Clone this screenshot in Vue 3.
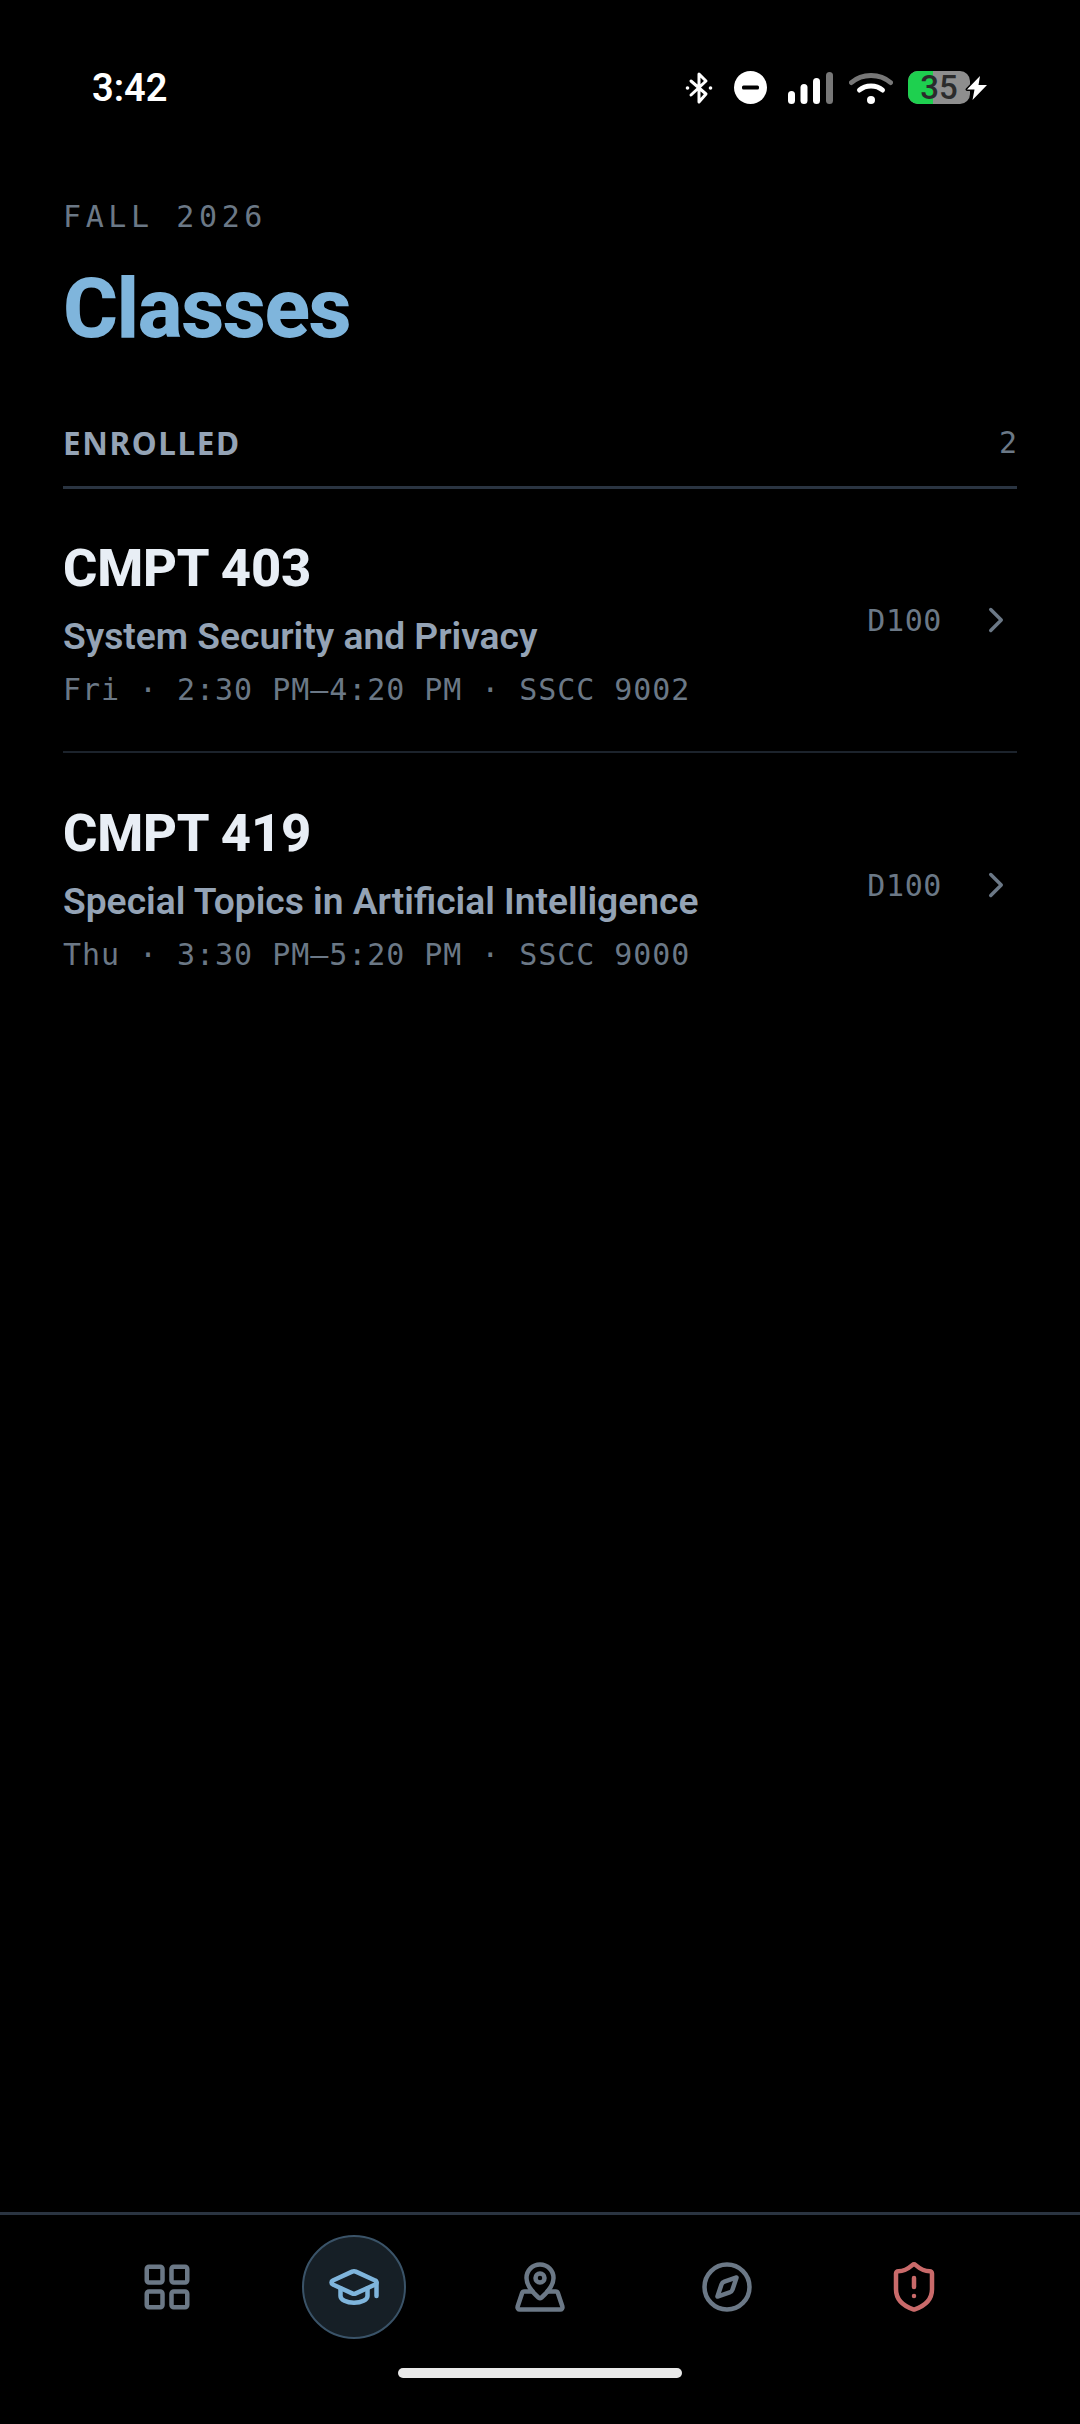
<template>
  <div class="screen">
    <div class="status-bar">
      <span class="time">3:42</span>
      <div class="status-icons">
        <svg class="ic-bt" width="28" height="34" viewBox="0 0 28 34" fill="none" stroke="#fff" stroke-width="3" stroke-linecap="round" stroke-linejoin="round">
          <path d="M6 10 L21 23 L14 31 V3 L21 10 L6 24" />
          <circle cx="2.5" cy="17" r="1.8" fill="#fff" stroke="none" />
          <circle cx="25.5" cy="17" r="1.8" fill="#fff" stroke="none" />
        </svg>
        <svg class="ic-dnd" width="33" height="33" viewBox="0 0 33 33">
          <circle cx="16.5" cy="16.5" r="16.5" fill="#fff" />
          <rect x="8" y="14.5" width="17" height="4" rx="1.5" fill="#000" />
        </svg>
        <svg class="ic-signal" width="45" height="32" viewBox="0 0 45 32">
          <rect x="0" y="19" width="7" height="13" rx="3.5" fill="#fff" />
          <rect x="12.5" y="12" width="7" height="20" rx="3.5" fill="#fff" />
          <rect x="25" y="6" width="7" height="26" rx="3.5" fill="#fff" />
          <rect x="38" y="0" width="7" height="32" rx="3.5" fill="#777" />
        </svg>
        <svg class="ic-wifi" width="44" height="32" viewBox="0 0 44 32" fill="none" stroke-linecap="round">
          <path d="M2.5 10.5 C13 1 31 1 41.5 10.5" stroke="#777" stroke-width="5" />
          <path d="M10.5 18 C16.5 12.5 27.5 12.5 33.5 18" stroke="#fff" stroke-width="5" />
          <circle cx="22" cy="28" r="4" fill="#fff" />
        </svg>
        <div class="battery">
          <div class="battery-fill" :style="{ width: batteryLevel + 5 + '%' }"></div>
          <span class="battery-num">{{ batteryLevel }}</span>
          <svg class="ic-bolt" width="26" height="30" viewBox="0 0 26 30">
            <path d="M16 3 L3 16.5 H10.5 L8.5 27 L23 12 H14.5 Z" fill="#fff" stroke="#000" stroke-width="3" stroke-linejoin="round" paint-order="stroke" />
          </svg>
        </div>
      </div>
    </div>

    <main class="content">
      <div class="term">FALL 2026</div>
      <h1 class="title">Classes</h1>

      <div class="section-head">
        <span class="section-label">ENROLLED</span>
        <span class="section-count">{{ classes.length }}</span>
      </div>

      <div v-for="c in classes" :key="c.code" class="class-row">
        <div class="class-info">
          <div class="class-code">{{ c.code }}</div>
          <div class="class-name">{{ c.name }}</div>
          <div class="class-meta">{{ c.meta }}</div>
        </div>
        <span class="class-section">{{ c.section }}</span>
        <svg class="chevron" width="42" height="42" viewBox="0 0 24 24" fill="none" stroke="currentColor" stroke-width="2" stroke-linecap="round" stroke-linejoin="round">
          <path d="m9 18 6-6-6-6" />
        </svg>
      </div>
    </main>

    <nav class="tabbar">
      <div v-for="t in tabs" :key="t.name" class="tab" :class="{ active: t.active, alert: t.alert }">
        <div class="tab-icon">
          <svg width="54" height="54" viewBox="0 0 24 24" fill="none" stroke="currentColor" stroke-width="2" stroke-linecap="round" stroke-linejoin="round">
            <template v-if="t.name === 'home'">
              <rect x="3" y="3" width="7" height="7" rx="1" />
              <rect x="14" y="3" width="7" height="7" rx="1" />
              <rect x="14" y="14" width="7" height="7" rx="1" />
              <rect x="3" y="14" width="7" height="7" rx="1" />
            </template>
            <template v-else-if="t.name === 'classes'">
              <path d="M21.42 10.922a1 1 0 0 0-.019-1.838L12.83 5.18a2 2 0 0 0-1.66 0L2.6 9.08a1 1 0 0 0 0 1.832l8.57 3.908a2 2 0 0 0 1.66 0z" />
              <path d="M22 10v6" />
              <path d="M6 12.5V16a6 3 0 0 0 12 0v-3.5" />
            </template>
            <template v-else-if="t.name === 'map'">
              <path d="M18 8c0 3.613-3.869 7.429-5.393 8.795a1 1 0 0 1-1.214 0C9.87 15.429 6 11.613 6 8a6 6 0 0 1 12 0" />
              <circle cx="12" cy="8" r="2" />
              <path d="M8.714 14h-3.71a1 1 0 0 0-.948.683l-2.004 6A1 1 0 0 0 3 22h18a1 1 0 0 0 .948-1.316l-2-6a1 1 0 0 0-.949-.684h-3.712" />
            </template>
            <template v-else-if="t.name === 'compass'">
              <path d="m16.24 7.76-1.804 5.411a2 2 0 0 1-1.265 1.265L7.76 16.24l1.804-5.411a2 2 0 0 1 1.265-1.265z" />
              <circle cx="12" cy="12" r="10" />
            </template>
            <template v-else>
              <path d="M20 13c0 5-3.5 7.5-7.66 8.95a1 1 0 0 1-.67-.01C7.5 20.5 4 18 4 13V6a1 1 0 0 1 1-1c2 0 4.5-1.2 6.24-2.72a1.17 1.17 0 0 1 1.52 0C14.51 3.81 17 5 19 5a1 1 0 0 1 1 1z" />
              <path d="M12 8v4" />
              <path d="M12 16h.01" />
            </template>
          </svg>
        </div>
      </div>
    </nav>

    <div class="home-bar"><div class="home-pill"></div></div>
  </div>
</template>

<script setup>
const batteryLevel = 35

const classes = [
  { code: 'CMPT 403', name: 'System Security and Privacy', meta: 'Fri · 2:30 PM–4:20 PM · SSCC 9002', section: 'D100' },
  { code: 'CMPT 419', name: 'Special Topics in Artificial Intelligence', meta: 'Thu · 3:30 PM–5:20 PM · SSCC 9000', section: 'D100' }
]

const tabs = [
  { name: 'home' },
  { name: 'classes', active: true },
  { name: 'map' },
  { name: 'compass' },
  { name: 'safety', alert: true }
]
</script>

<style>
html,
body {
  margin: 0;
  background: #000;
}
</style>

<style scoped>
.screen {
  width: 1080px;
  height: 2424px;
  background: #000;
  display: flex;
  flex-direction: column;
  font-family: Roboto, "Liberation Sans", sans-serif;
  overflow: hidden;
}

.status-bar {
  height: 175px;
  flex: none;
  display: flex;
  align-items: center;
  justify-content: space-between;
  padding: 0 110px 0 92px;
  box-sizing: border-box;
}

.time {
  color: #fff;
  font-size: 38px;
  font-weight: 600;
}

.status-icons {
  display: flex;
  align-items: center;
}

.ic-bt { margin-right: 21px; }
.ic-dnd { margin-right: 21px; }
.ic-signal { margin-right: 16px; }
.ic-wifi { margin-right: 15px; }

.battery {
  position: relative;
  width: 62px;
  height: 33px;
  border-radius: 10px;
  background: #8e8e8e;
  display: flex;
  align-items: center;
  justify-content: center;
}

.battery-fill {
  position: absolute;
  left: 0;
  top: 0;
  bottom: 0;
  background: #1ed04f;
  border-radius: 10px 0 0 10px;
}

.battery-num {
  position: relative;
  color: #2b2b2b;
  font-size: 33px;
  font-weight: 500;
  line-height: 33px;
}

.ic-bolt {
  position: absolute;
  left: 56px;
  top: 2px;
}

.content {
  flex: 1;
  padding: 24px 63px 0;
}

.term {
  font-family: "DejaVu Sans Mono", monospace;
  font-size: 30px;
  line-height: 36px;
  letter-spacing: 4.6px;
  color: #6b7886;
}

.title {
  margin: 24px 0 0;
  font-size: 84px;
  line-height: 100px;
  font-weight: 800;
  letter-spacing: -1.45px;
  color: #7fb5dc;
}

.section-head {
  margin-top: 66px;
  height: 61px;
  display: flex;
  justify-content: space-between;
  align-items: flex-start;
  border-bottom: 3px solid #2a3441;
  line-height: 36px;
}

.section-label {
  font-family: "Noto Sans", sans-serif;
  font-size: 31.5px;
  font-weight: 700;
  letter-spacing: 1.6px;
  color: #94a3b5;
}

.section-count {
  font-family: "DejaVu Sans Mono", monospace;
  font-size: 30px;
  color: #6b7886;
}

.class-row {
  height: 264px;
  box-sizing: border-box;
  display: flex;
  align-items: center;
  border-bottom: 2px solid #1c232c;
}

.class-row:last-child {
  border-bottom: none;
}

.class-info {
  flex: 1;
  min-width: 0;
  padding-top: 6px;
}

.class-code {
  font-size: 52.5px;
  line-height: 60px;
  font-weight: 800;
  letter-spacing: -0.2px;
  color: #e8eef5;
}

.class-name {
  margin-top: 16px;
  font-size: 37.2px;
  line-height: 44px;
  font-weight: 600;
  color: #94a3b5;
}

.class-meta {
  margin-top: 14px;
  font-family: "DejaVu Sans Mono", monospace;
  font-size: 30px;
  line-height: 36px;
  letter-spacing: 0.95px;
  color: #6b7886;
}

.class-section {
  font-family: "DejaVu Sans Mono", monospace;
  font-size: 30px;
  letter-spacing: 0.6px;
  color: #6b7886;
  margin-right: 33px;
}

.chevron {
  color: #6b7886;
}

.tabbar {
  flex: none;
  height: 135px;
  box-sizing: border-box;
  padding: 12px 73px 0 74px;
  display: grid;
  grid-template-columns: repeat(5, 1fr);
  align-items: center;
  border-top: 3px solid #2a3441;
}

.tab {
  display: flex;
  justify-content: center;
  color: #6b7886;
}

.tab-icon {
  width: 104px;
  height: 104px;
  box-sizing: border-box;
  border-radius: 50%;
  display: flex;
  align-items: center;
  justify-content: center;
}

.tab.active .tab-icon {
  background: #161f26;
  border: 2px solid #3a5368;
  color: #7fb5dc;
}

.tab.alert {
  color: #c96a6a;
}

.home-bar {
  flex: none;
  height: 77px;
  display: flex;
  justify-content: center;
  padding-top: 21px;
  box-sizing: border-box;
}

.home-pill {
  width: 284px;
  height: 10px;
  border-radius: 5px;
  background: #e9e9e9;
}
</style>
